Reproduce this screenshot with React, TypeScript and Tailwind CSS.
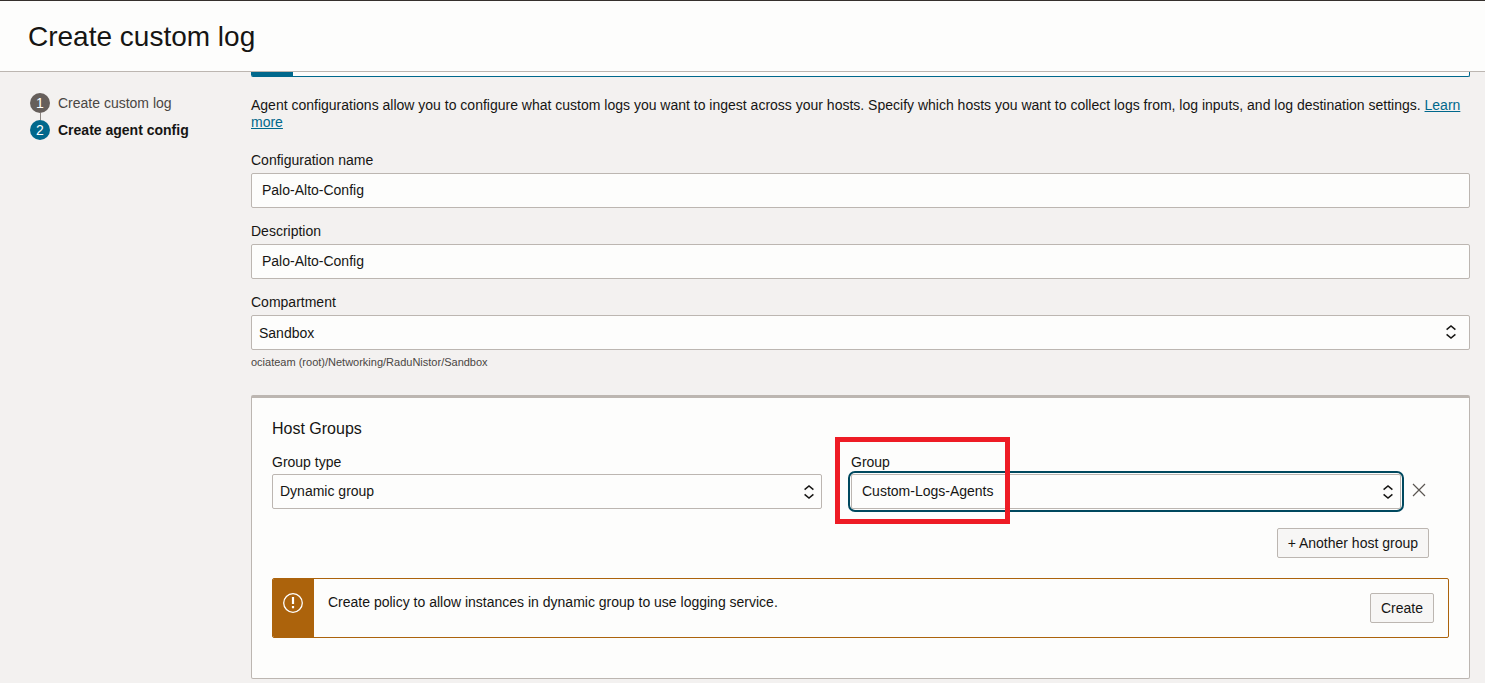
import { useState } from 'react';
import type { ReactNode, SelectHTMLAttributes } from 'react';

const steps = [
    { id: 1, label: 'Create custom log' },
    { id: 2, label: 'Create agent config' },
];

interface SelectBoxProps extends SelectHTMLAttributes<HTMLSelectElement> {
    children: ReactNode;
    focused?: boolean;
    padding?: string;
    arrows?: string;
}

function SelectBox({ children, focused = false, padding = 'pl-[7px]', arrows = 'top-2.5 right-3.5', ...props }: SelectBoxProps) {
    return (
        <div className={focused ? 'relative rounded-sm outline-2 outline-offset-1 outline-[#00485e]' : 'relative'}>
            <select
                {...props}
                className={`block h-[35px] w-full appearance-none rounded-xs border border-[#bcb6b1] bg-[#fdfdfc] pr-8 text-sm focus:outline-none ${padding}`}
            >
                {children}
            </select>
            <svg className={`pointer-events-none absolute ${arrows}`} width="10" height="14" viewBox="0 0 10 14" fill="none" stroke="#161513" strokeWidth="1.5" aria-hidden="true">
                <path d="M.6 4.6 5 1l4.4 3.6M.6 9.4 5 13l4.4-3.6" />
            </svg>
        </div>
    );
}

interface TextFieldProps {
    id: string;
    label: string;
    value: string;
    onChange: (value: string) => void;
}

function TextField({ id, label, value, onChange }: TextFieldProps) {
    return (
        <div>
            <label htmlFor={id} className="mb-1 block">{label}</label>
            <input
                id={id}
                type="text"
                value={value}
                onChange={(e) => onChange(e.target.value)}
                className="block h-[35px] w-full rounded-xs border border-[#bcb6b1] bg-[#fdfdfc] px-2.5 pb-0.5 text-sm"
            />
        </div>
    );
}

function Stepper() {
    const current = 2;

    return (
        <nav className="w-[251px] shrink-0 pt-[21px] pl-[30px]" aria-label="Steps">
            <ol>
                {steps.map((step, index) => (
                    <li key={step.id}>
                        {index > 0 && <div className="ml-2.5 h-[7px] w-px bg-[#8b8580]"></div>}
                        <div className="flex items-center gap-2">
                            <span className={`flex size-5 items-center justify-center rounded-full text-white ${step.id === current ? 'bg-[#00688c]' : 'bg-[#665f5b]'}`}>
                                {step.id}
                            </span>
                            <span className={step.id === current ? 'font-bold' : 'text-[#4a4643]'}>{step.label}</span>
                        </div>
                    </li>
                ))}
            </ol>
        </nav>
    );
}

function PolicyAlert() {
    return (
        <div className="mt-5 flex h-[60px] overflow-hidden rounded-xs border border-[#ac630c]" role="alert">
            <div className="w-[41px] shrink-0 bg-[#ac630c] pt-3.5 pl-2.5">
                <svg width="20" height="20" viewBox="0 0 20 20" fill="none" stroke="#fff" aria-hidden="true">
                    <circle cx="10" cy="10" r="9.3" strokeWidth="1.3" />
                    <path d="M10 4v7M10 13v2.2" strokeWidth="2.2" />
                </svg>
            </div>
            <p className="flex-1 pt-[15px] pl-3.5">Create policy to allow instances in dynamic group to use logging service.</p>
            <button type="button" className="mt-3.5 mr-3.5 h-[30px] rounded-xs border border-[#bcb6b1] bg-[#f7f6f5] px-2.5">
                Create
            </button>
        </div>
    );
}

function HostGroups() {
    return (
        <section className="mt-[26px] rounded-xs border border-t-3 border-[#bcb6b1] bg-[#fdfdfc] px-5 pt-5 pb-10">
            <h2 className="text-base leading-[22px]">Host Groups</h2>

            <div className="mt-3.5 flex items-end">
                <div className="grid flex-1 grid-cols-2 gap-[29px]">
                    <div>
                        <label htmlFor="group-type" className="mb-[3px] block">Group type</label>
                        <SelectBox id="group-type" padding="pl-[7px] pb-0.5" arrows="top-[11px] right-2" defaultValue="dynamic">
                            <option value="dynamic">Dynamic group</option>
                            <option value="user">User group</option>
                        </SelectBox>
                    </div>
                    <div className="relative">
                        <label htmlFor="group" className="mb-[3px] block">Group</label>
                        <SelectBox id="group" focused padding="pl-2.5 pb-0.5" arrows="top-[11px] right-2" defaultValue="agents">
                            <option value="agents">Custom-Logs-Agents</option>
                        </SelectBox>
                        {/* Highlight around the group name */}
                        <div className="pointer-events-none absolute -top-[17px] -left-4 h-[87px] w-[175px] border-5 border-[#ee1c25]"></div>
                    </div>
                </div>
                <button type="button" aria-label="Remove host group" className="mr-[23px] mb-3 ml-[11px]">
                    <svg width="14" height="14" viewBox="0 0 14 14" fill="none" stroke="#5b5652" strokeWidth="1.2" aria-hidden="true">
                        <path d="M1 1l12 12M13 1 1 13" />
                    </svg>
                </button>
            </div>

            <div className="mt-[19px] mr-5 flex justify-end">
                <button type="button" className="h-[30px] rounded-xs border border-[#bcb6b1] bg-[#f7f6f5] px-2.5">
                    + Another host group
                </button>
            </div>

            <PolicyAlert />
        </section>
    );
}

export default function App() {
    const [name, setName] = useState('Palo-Alto-Config');
    const [description, setDescription] = useState('Palo-Alto-Config');

    return (
        <div className="min-h-screen bg-[#f3f1f0] font-['Liberation_Sans',Arial,sans-serif] text-sm leading-[17px] text-[#161513]">
            <header className="flex h-[72px] items-center border-t border-b border-t-[#35302d] border-b-[#bcb6b1] bg-[#fdfdfc] px-7 pt-0.5">
                <h1 className="text-[28px] leading-8">Create custom log</h1>
            </header>

            <div className="flex">
                <Stepper />

                <main className="min-w-0 flex-1 pr-[15px] pb-1">
                    {/* Tail of the info banner scrolled under the header */}
                    <div className="flex h-[5px] overflow-hidden rounded-b-xs border-r border-b border-[#00688c] bg-[#fdfdfc]">
                        <div className="w-[42px] bg-[#00688c]"></div>
                    </div>

                    <p className="mt-5">
                        Agent configurations allow you to configure what custom logs you want to ingest across your hosts. Specify which hosts you want to collect logs from, log inputs, and log destination settings.{' '}
                        <a href="#learn-more" className="text-[#00688c] underline">Learn more</a>
                    </p>

                    <form className="mt-[21px]" onSubmit={(e) => e.preventDefault()}>
                        <div className="space-y-[15px]">
                            <TextField id="config-name" label="Configuration name" value={name} onChange={setName} />
                            <TextField id="description" label="Description" value={description} onChange={setDescription} />
                            <div>
                                <label htmlFor="compartment" className="mb-1 block">Compartment</label>
                                <SelectBox id="compartment" defaultValue="sandbox">
                                    <option value="sandbox">Sandbox</option>
                                </SelectBox>
                                <p className="mt-1.5 text-[11px] leading-[13px] text-[#4a4643]">ociateam (root)/Networking/RaduNistor/Sandbox</p>
                            </div>
                        </div>

                        <HostGroups />
                    </form>
                </main>
            </div>
        </div>
    );
}
